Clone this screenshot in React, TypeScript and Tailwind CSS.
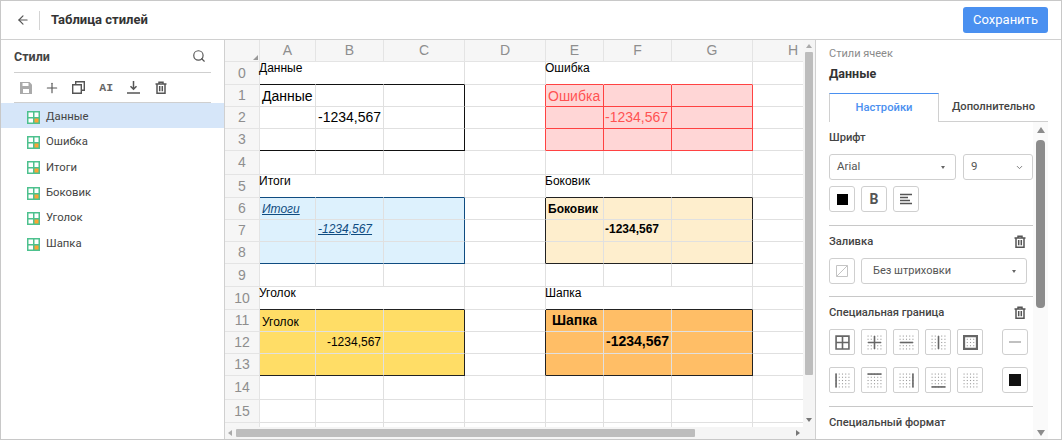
import { ArrowLeft, ChevronDown, Plus, Search } from "lucide-react";
import type { ReactNode } from "react";

const styles = ["Данные", "Ошибка", "Итоги", "Боковик", "Уголок", "Шапка"];
const columns = ["A", "B", "C", "D", "E", "F", "G", "H"];
const rowCount = 17;
const labelRows = [0, 5, 10];

type Block = {
  col: number;
  row: number;
  bg: string;
  edgeR: string;
  edgeB: string;
  innerR: string;
  innerB: string;
};

// every sample table is 3 columns by 3 rows
const blocks: Block[] = [
  { col: 0, row: 1, bg: "bg-white", edgeR: "border-r-[#111]", edgeB: "border-b-[#111]", innerR: "border-r-[#e0e0e0]", innerB: "border-b-[#e0e0e0]" },
  { col: 4, row: 1, bg: "bg-[#ffd6d6]", edgeR: "border-r-[#ff4242]", edgeB: "border-b-[#ff4242]", innerR: "border-r-[#ff4242]", innerB: "border-b-[#ff4242]" },
  { col: 0, row: 6, bg: "bg-[#ddf1fd]", edgeR: "border-r-[#0f4c81]", edgeB: "border-b-[#0f4c81]", innerR: "border-r-[#e0e0e0]", innerB: "border-b-[#e0e0e0]" },
  { col: 4, row: 6, bg: "bg-[#feeecd]", edgeR: "border-r-[#222]", edgeB: "border-b-[#222]", innerR: "border-r-[#e0e0e0]", innerB: "border-b-[#e0e0e0]" },
  { col: 0, row: 11, bg: "bg-[#ffdd66]", edgeR: "border-r-[#222]", edgeB: "border-b-[#222]", innerR: "border-r-[#e0e0e0]", innerB: "border-b-[#e0e0e0]" },
  { col: 4, row: 11, bg: "bg-[#ffbe66]", edgeR: "border-r-[#222]", edgeB: "border-b-[#222]", innerR: "border-r-[#e0e0e0]", innerB: "border-b-[#e0e0e0]" },
];

const cellText: Record<string, { text: string; cls: string }> = {
  "0:0": { text: "Данные", cls: "-mt-px -ml-px self-start text-[12px] leading-[14px]" },
  "1:0": { text: "Данные", cls: "pl-[2px] pt-[2px] text-[14px]" },
  "2:1": { text: "-1234,567", cls: "pl-[2px] text-[14px]" },
  "0:4": { text: "Ошибка", cls: "-mt-px -ml-px self-start text-[12px] leading-[14px]" },
  "1:4": { text: "Ошибка", cls: "pl-[2px] pt-[2px] text-[14px] text-[#ff5252]" },
  "2:5": { text: "-1234,567", cls: "pl-[1px] text-[14px] text-[#ff5252]" },
  "5:0": { text: "Итоги", cls: "-mt-px -ml-px self-start text-[12px] leading-[14px]" },
  "6:0": { text: "Итоги", cls: "pl-[2px] text-[12px] italic underline text-[#0f4c81]" },
  "7:1": { text: "-1234,567", cls: "pl-[2px] pb-[4px] text-[12px] italic underline text-[#0f4c81]" },
  "5:4": { text: "Боковик", cls: "-mt-px -ml-px self-start text-[12px] leading-[14px]" },
  "6:4": { text: "Боковик", cls: "pl-[2px] text-[12px] font-bold" },
  "7:5": { text: "-1234,567", cls: "pl-[1px] pb-[4px] text-[12px] font-bold" },
  "10:0": { text: "Уголок", cls: "-mt-px -ml-px self-start text-[12px] leading-[14px]" },
  "11:0": { text: "Уголок", cls: "pl-[2px] pt-[2px] text-[12px]" },
  "12:1": { text: "-1234,567", cls: "ml-auto pr-[2px] pb-[2px] text-[12px]" },
  "10:4": { text: "Шапка", cls: "-mt-px -ml-px self-start text-[12px] leading-[14px]" },
  "11:4": { text: "Шапка", cls: "mx-auto text-[14px] font-bold" },
  "12:5": { text: "-1234,567", cls: "mx-auto pb-[2px] text-[14px] font-bold" },
};

function blockAt(col: number, row: number) {
  return blocks.find(
    (b) => col >= b.col && col < b.col + 3 && row >= b.row && row < b.row + 3
  );
}

function cellClass(col: number, row: number) {
  const own = blockAt(col, row);
  const right = blockAt(col + 1, row);
  const below = blockAt(col, row + 1);
  let r = "border-r-[#e0e0e0]";
  let b = "border-b-[#e0e0e0]";
  if (own) {
    r = col === own.col + 2 ? own.edgeR : own.innerR;
    b = row === own.row + 2 ? own.edgeB : own.innerB;
  }
  if (right && right.col === col + 1) r = right.edgeR;
  if (below && below.row === row + 1) b = below.edgeB;
  const merged =
    labelRows.includes(row) && (col === 0 || col === 1 || col === 4 || col === 5);
  if (merged) r = "border-r-white";
  return `${own ? own.bg : "bg-white"} ${r} ${b}`;
}

function TrashIcon({ className = "" }: { className?: string }) {
  return (
    <svg width="14" height="14" viewBox="0 0 14 14" fill="none" className={className}>
      <path d="M1.5 3h11M5 3V1.2h4V3M3 3v9.2h8V3" stroke="#555" strokeWidth="1.5" />
      <path d="M5.7 5v5.2M8.3 5v5.2" stroke="#555" strokeWidth="1.5" />
    </svg>
  );
}

function StyleIcon() {
  return (
    <svg width="13" height="13" viewBox="0 0 13 13" className="shrink-0">
      <rect width="13" height="13" fill="#4dc18e" />
      <rect x="1.5" y="1.5" width="4.5" height="4.5" fill="#fff" />
      <rect x="7.5" y="1.5" width="4" height="4.5" fill="#fff" />
      <rect x="1.5" y="7.5" width="4.5" height="4" fill="#fff" />
      <rect x="7.5" y="7.5" width="4" height="4" fill="#fba534" />
    </svg>
  );
}

function BorderIcon({ d, dots = true, width = 1.5 }: { d: string; dots?: boolean; width?: number }) {
  const pts = [0.5, 3.5, 6.5, 9.5, 12.5];
  return (
    <svg width="15" height="15" viewBox="-0.5 -0.5 14 14">
      {dots &&
        pts.flatMap((x) =>
          pts.map((y) => <rect key={`${x}-${y}`} x={x - 0.5} y={y - 0.5} width="1" height="1" fill="#999" />)
        )}
      <path d={d} stroke="#666" strokeWidth={width} fill="none" />
    </svg>
  );
}

function IconButton({ children, rounded = "rounded-[2px]" }: { children: ReactNode; rounded?: string }) {
  return (
    <div className={`flex h-[26px] w-[26px] shrink-0 items-center justify-center border border-[#cfcfcf] bg-white ${rounded}`}>
      {children}
    </div>
  );
}

function SectionLabel({ children, trash = false, className = "" }: { children: ReactNode; trash?: boolean; className?: string }) {
  return (
    <div className={`flex h-4 items-center justify-between pr-[6px] text-[11.2px] font-medium text-[#444] ${className}`}>
      <span>{children}</span>
      {trash && <TrashIcon />}
    </div>
  );
}

function Caret() {
  return <span className="h-0 w-0 border-x-[2.5px] border-t-[3px] border-x-transparent border-t-[#666]" />;
}

function Sheet() {
  return (
    <div className="flex min-w-0 flex-1 bg-white">
      <div className="flex min-w-0 flex-1 flex-col">
        <div className="flex-1 overflow-hidden">
          <div className="grid grid-cols-[35px_56px_68px_81px_81px_58px_68px_81px_81px] grid-rows-[22px_23px_22px_22px_22px_24px_23px_22px_22px_22px_23px_23px_22px_22px_22px_24px_23px_22px] font-['Liberation_Sans',sans-serif] text-black">
            <div className="flex items-end justify-end border-r border-b border-[#e4e4e4] bg-[#f6f6f6] pr-[1px] pb-[1px]">
              <svg width="5" height="5" viewBox="0 0 5 5">
                <path d="M5 0v5H0z" fill="#999" />
              </svg>
            </div>
            {columns.map((c) => (
              <div key={c} className="flex items-center justify-center border-r border-b border-[#e4e4e4] bg-[#f6f6f6] text-[14px] text-[#8e8e8e]">
                {c}
              </div>
            ))}
            {Array.from({ length: rowCount }, (_, row) => [
              <div key={`h${row}`} className="flex items-center justify-center border-r border-b border-[#e4e4e4] bg-[#f6f6f6] text-[14px] text-[#8e8e8e]">
                {row < 16 ? row : ""}
              </div>,
              ...columns.map((_c, col) => {
                const t = cellText[`${row}:${col}`];
                return (
                  <div key={`${row}:${col}`} className={`flex items-center whitespace-nowrap border-r border-b ${cellClass(col, row)}`}>
                    {t && <span className={t.cls}>{t.text}</span>}
                  </div>
                );
              }),
            ])}
          </div>
        </div>
        <div className="flex h-[12px] shrink-0 items-center bg-[#f5f5f5]">
          <span className="ml-[3px] h-0 w-0 border-y-[3px] border-r-[4px] border-y-transparent border-r-[#aaa]" />
          <div className="ml-[4px] h-[8px] w-[459px] rounded-[1px] bg-[#bdbdbd]" />
          <span className="ml-auto mr-[3px] h-0 w-0 border-y-[3px] border-l-[4px] border-y-transparent border-l-[#777]" />
        </div>
      </div>
      <div className="flex w-[12px] shrink-0 flex-col items-center bg-[#f5f5f5]">
        <span className="mt-[4px] h-0 w-0 border-x-[3px] border-b-[4px] border-x-transparent border-b-[#aaa]" />
        <div className="mt-[4px] h-[323px] w-[8px] rounded-[1px] bg-[#bdbdbd]" />
        <span className="mt-[43px] h-0 w-0 border-x-[3px] border-t-[4px] border-x-transparent border-t-[#777]" />
      </div>
    </div>
  );
}

function SidePanel() {
  const firstRow = [
    { d: "M0.5 0.5h12v12h-12zM6.5 0.5v12M0.5 6.5h12", dots: false },
    { d: "M6.5 0.5v12M0.5 6.5h12" },
    { d: "M0.5 6.5h12" },
    { d: "M6.5 0.5v12" },
    { d: "M0.5 0.5h12v12h-12z", width: 2 },
  ];
  const secondRow = ["M0.5 0v13", "M0 0.5h13", "M12.5 0v13", "M0 12.5h13", ""];

  return (
    <aside className="flex w-[246px] shrink-0 flex-col border-l border-[#d0d0d0] pl-[13px] pr-[13px] font-['Roboto',sans-serif]">
      <div className="mt-[7px] text-[11px] leading-[14px] text-[#8a8a8a]">Стили ячеек</div>
      <div className="mt-[5px] text-[12.5px] font-bold leading-[16px] text-[#333]">Данные</div>
      <div className="mt-[11px] flex h-[29px] shrink-0 text-[11.2px]">
        <div className="flex w-[110px] items-center justify-center border-x border-t border-x-[#d0d0d0] border-t-[#4a90f0] font-medium text-[#4a90f0]">
          Настройки
        </div>
        <div className="flex flex-1 items-center justify-center border-b border-[#d0d0d0] font-medium text-[#444]">
          Дополнительно
        </div>
      </div>
      <div className="flex min-h-0 flex-1 overflow-hidden">
        <div className="w-[204px] shrink-0 overflow-hidden pt-[8px]">
          <SectionLabel>Шрифт</SectionLabel>
          <div className="mt-[8px] flex gap-[7px] text-[11.5px] text-[#555]">
            <div className="flex h-[26px] w-[127px] items-center justify-between rounded-[3px] border border-[#cfcfcf] pl-[7px] pr-[10px]">
              Arial
              <Caret />
            </div>
            <div className="flex h-[26px] flex-1 items-center justify-between rounded-[3px] border border-[#cfcfcf] pl-[7px] pr-[8px]">
              9
              <ChevronDown size={9} color="#777" strokeWidth={2.5} />
            </div>
          </div>
          <div className="mt-[6px] flex gap-[6px]">
            <IconButton rounded="rounded-[3px]">
              <span className="h-[11px] w-[11px] bg-black" />
            </IconButton>
            <IconButton rounded="rounded-[3px]">
              <span className="text-[14px] font-bold text-[#555]">B</span>
            </IconButton>
            <IconButton rounded="rounded-[3px]">
              <svg width="12" height="12" viewBox="0 0 12 12" fill="none" stroke="#555" strokeWidth="1.4">
                <path d="M0 1.5h12M0 4.5h8M0 7.5h10M0 10.5h12" />
              </svg>
            </IconButton>
          </div>
          <div className="mt-[13px] h-px bg-[#c8c8c8]" />
          <SectionLabel trash className="mt-[8px]">Заливка</SectionLabel>
          <div className="mt-[8px] flex gap-[6px]">
            <IconButton rounded="rounded-[3px]">
              <svg width="12" height="12" viewBox="0 0 12 12" fill="none" stroke="#c4c4c4">
                <path d="M0.5 0.5h11v11h-11zM0.5 11.5l11-11" />
              </svg>
            </IconButton>
            <div className="flex h-[26px] w-[166px] items-center justify-between rounded-[3px] border border-[#cfcfcf] pl-[11px] pr-[10px] text-[11px] text-[#555]">
              Без штриховки
              <Caret />
            </div>
          </div>
          <div className="mt-[12px] h-px bg-[#c8c8c8]" />
          <SectionLabel trash className="mt-[8px]">Специальная граница</SectionLabel>
          <div className="mt-[8px] flex gap-[6px]">
            {firstRow.map((b) => (
              <IconButton key={b.d}>
                <BorderIcon d={b.d} dots={b.dots !== false} width={b.width} />
              </IconButton>
            ))}
            <div className="ml-[13px]">
              <IconButton rounded="rounded-[3px]">
                <span className="h-[2px] w-[12px] bg-[#c0c0c0]" />
              </IconButton>
            </div>
          </div>
          <div className="mt-[12px] flex gap-[6px]">
            {secondRow.map((d, i) => (
              <IconButton key={i}>
                <BorderIcon d={d} />
              </IconButton>
            ))}
            <div className="ml-[13px]">
              <IconButton rounded="rounded-[3px]">
                <span className="h-[12px] w-[12px] bg-[#111]" />
              </IconButton>
            </div>
          </div>
          <div className="mt-[13px] h-px bg-[#c8c8c8]" />
          <SectionLabel className="mt-[8px]">Специальный формат</SectionLabel>
        </div>
        <div className="flex w-[15px] shrink-0 flex-col items-center bg-[#fafafa]">
          <span className="mt-[5px] h-0 w-0 border-x-[4px] border-b-[6px] border-x-transparent border-b-[#8c8c8c]" />
          <div className="mt-[7px] h-[168px] w-[9px] rounded-[4px] bg-[#8c8c8c]" />
          <span className="mt-[122px] h-0 w-0 border-x-[4px] border-t-[6px] border-x-transparent border-t-[#8c8c8c]" />
        </div>
      </div>
    </aside>
  );
}

export default function App() {
  return (
    <div className="flex h-[440px] w-[1062px] flex-col overflow-hidden border border-[#c8c8c8] bg-white font-['Roboto',sans-serif]">
      <header className="flex h-[39px] shrink-0 items-center border-b border-[#d0d0d0]">
        <ArrowLeft size={14} color="#555" className="ml-[15px]" />
        <div className="ml-[9px] h-[19px] w-px bg-[#d4d4d4]" />
        <h1 className="ml-[11px] text-[13px] font-bold text-[#333]">Таблица стилей</h1>
        <button type="button" className="ml-auto mr-[13px] h-[26px] w-[85px] rounded-[3px] bg-[#4a90f0] text-[13px] text-white">
          Сохранить
        </button>
      </header>
      <div className="flex min-h-0 flex-1">
        <nav className="flex w-[224px] shrink-0 flex-col border-r border-[#d0d0d0]">
          <div className="mx-[13px] flex h-[33px] shrink-0 items-center justify-between border-b border-[#cfcfcf] pr-[5px]">
            <span className="pt-[2px] text-[12.5px] font-bold text-[#444]">Стили</span>
            <Search size={14} color="#555" strokeWidth={2} />
          </div>
          <div className="mx-[13px] flex h-[30px] shrink-0 items-center border-b border-[#cfcfcf]">
            <div className="flex w-[24px] justify-center">
              <svg width="12" height="12" viewBox="0 0 12 12">
                <path d="M0 0h9.5L12 2.5V12H0z" fill="#aaa" />
                <path d="M2.5 1h6v3h-6zM3 7h6v4H3z" fill="#fff" />
              </svg>
            </div>
            <div className="flex w-[27.3px] justify-center">
              <Plus size={16} color="#555" strokeWidth={1.7} />
            </div>
            <div className="flex w-[27.3px] justify-center">
              <svg width="13" height="13" viewBox="0 0 13 13" fill="none" stroke="#555" strokeWidth="1.4">
                <path d="M0.7 3.7h8.6v8.6H0.7zM3.7 3.7V0.7h8.6v8.6H9.3" />
              </svg>
            </div>
            <div className="flex w-[27.3px] justify-center font-['Liberation_Mono',monospace] text-[11.5px] font-bold text-[#666]">
              AI
            </div>
            <div className="flex w-[27.3px] justify-center">
              <svg width="13" height="13" viewBox="0 0 13 13" fill="none" stroke="#555" strokeWidth="1.5">
                <path d="M6.5 0v8M3.5 5.2l3 3 3-3M0 12h13" />
              </svg>
            </div>
            <div className="flex w-[27.3px] justify-center">
              <TrashIcon />
            </div>
          </div>
          <ul className="text-[11.3px] text-[#444]">
            {styles.map((s, i) => (
              <li key={s} className={`flex h-[25.4px] items-center gap-[6px] pl-[26px] pt-[3px] ${i === 0 ? "bg-[#d6e6f9]" : ""}`}>
                <StyleIcon />
                {s}
              </li>
            ))}
          </ul>
        </nav>
        <Sheet />
        <SidePanel />
      </div>
    </div>
  );
}
